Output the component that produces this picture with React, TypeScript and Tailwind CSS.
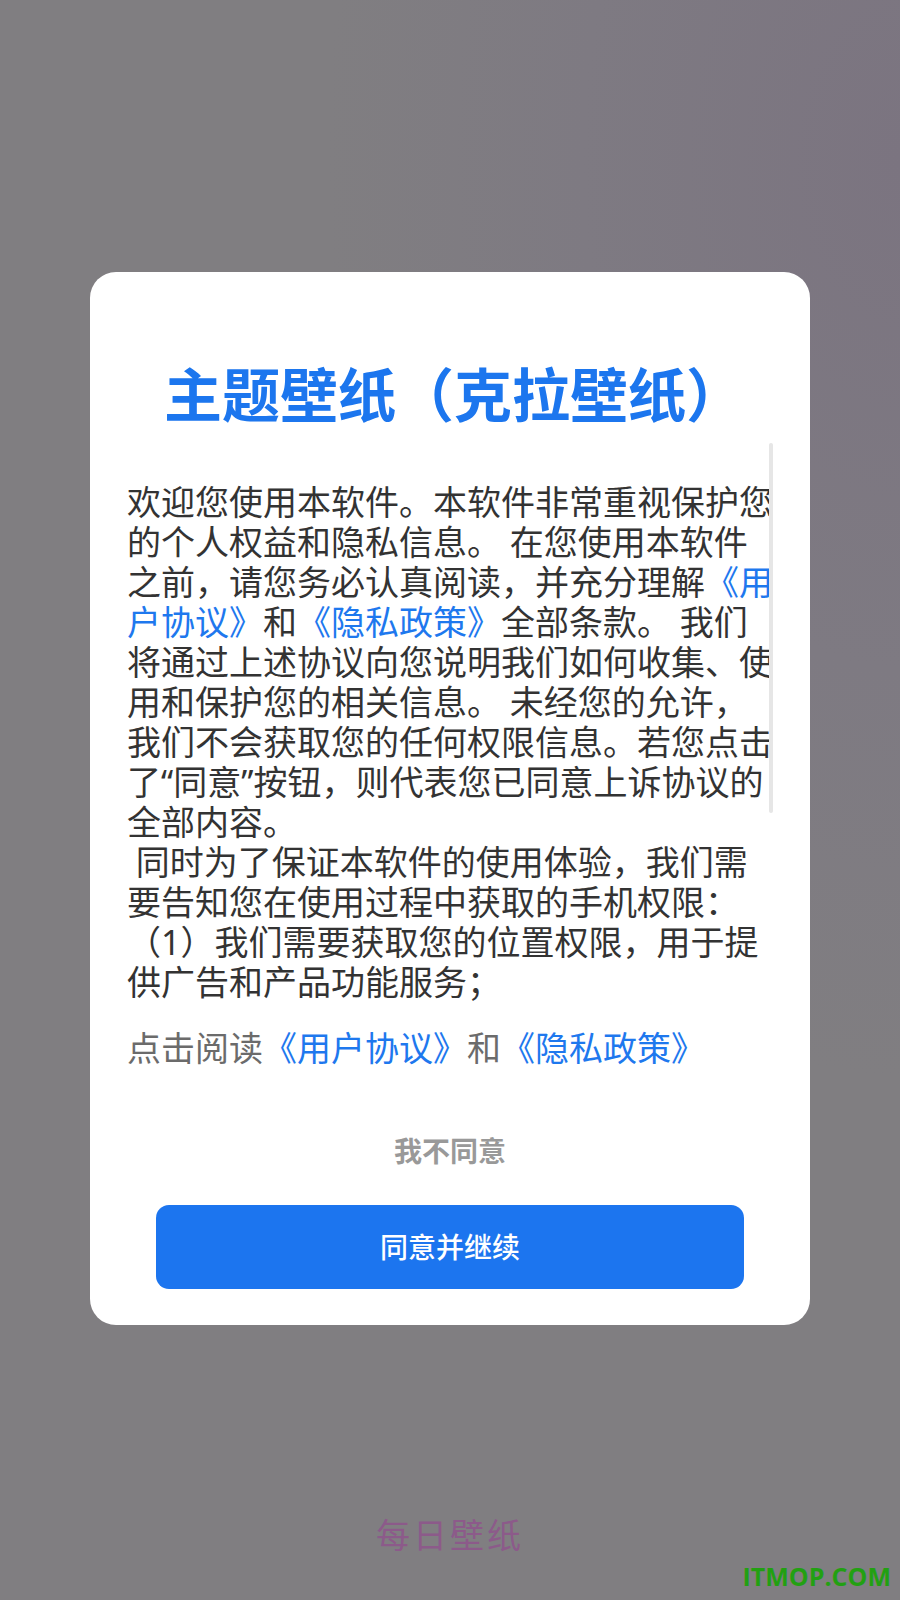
const bodyText = [
  "欢迎您使用本软件。本软件非常重视保护您的个人权益和隐私信息。 在您使用本软件之前，请您务必认真阅读，并充分理解",
];

function Link({ children }: { children: React.ReactNode }) {
  return <span className="text-[#1e78ee]">{children}</span>;
}

export default function App() {
  return (
    <div className="min-h-[1600px] w-[900px] flex flex-col bg-[#807e81] bg-[radial-gradient(ellipse_at_100%_10%,#7b7480_0%,#7e7a82_25%,#807e81_45%)] font-['Noto_Sans','Noto_Sans_CJK_SC',sans-serif]">
      <div className="mt-[272px] mx-auto w-[720px] bg-white rounded-[26px] flex flex-col pt-[91px] pb-[36px]">
        <h1 className="pl-[8px] text-center text-[58px] leading-[58px] font-bold text-[#1c76ee] font-['Noto_Sans_CJK_SC',sans-serif]">
          主题壁纸（克拉壁纸）
        </h1>

        <div className="relative mt-[22px] ml-[37px] w-[648px] h-[560px] overflow-hidden">
          <div className="pt-[39px] text-[34px] leading-[40px] text-[#333333] whitespace-pre-wrap">
            {bodyText[0]}
            <Link>《用户协议》</Link>和<Link>《隐私政策》</Link>
            {"全部条款。 我们将通过上述协议向您说明我们如何收集、使用和保护您的相关信息。 未经您的允许，我们不会获取您的任何权限信息。若您点击了“同意”按钮，则代表您已同意上诉协议的全部内容。\n 同时为了保证本软件的使用体验，我们需要告知您在使用过程中获取的手机权限：\n（1）我们需要获取您的位置权限，用于提供广告和产品功能服务；\n（2）我们需要获取您的存储权限，用于缓存壁纸图片和设置壁纸；\n（3）我们需要获取您的设备信息权限，用于保障账号安全。"}
          </div>
          <div className="absolute left-[642px] top-0 w-[4px] h-[370px] rounded-full bg-[#e6e6e6]" />
        </div>

        <p className="mt-[25px] ml-[37px] text-[34px] leading-[40px] text-[#6b6b6b]">
          点击阅读<Link>《用户协议》</Link>和<Link>《隐私政策》</Link>
        </p>

        <button className="mt-[65px] self-center text-[28px] leading-[36px] font-semibold text-[#999999]">
          我不同意
        </button>

        <button className="mt-[36px] mx-[66px] h-[84px] rounded-[13px] bg-[#1c75ef] text-white text-[28px] font-medium">
          同意并继续
        </button>
      </div>

      <div className="mt-[189px] text-center text-[34px] leading-[40px] tracking-[3px] text-[#8c5a8a] font-['Noto_Sans_CJK_SC',sans-serif]">
        每日壁纸
      </div>
      <div className="mt-[10px] self-end pr-[9px] text-[25px] leading-[25px] font-bold text-[#22a012] font-['Open_Sans',sans-serif]">
        ITMOP.COM
      </div>
    </div>
  );
}
